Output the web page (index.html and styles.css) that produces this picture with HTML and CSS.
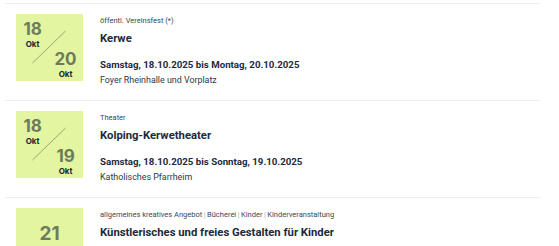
FILE: index.html
```html
<!DOCTYPE html>
<html lang="de">
<head>
<meta charset="utf-8">
<link rel="stylesheet" href="styles.css">
</head>
<body>
<ul class="events">
  <li class="event">
    <div class="datebox range">
      <div class="d start"><span class="day">18</span><span class="mon">Okt</span></div>
      <svg class="slash" viewBox="0 0 67 67" width="67" height="67"><line x1="16.5" y1="49" x2="49.5" y2="17" stroke="#9aa67f" stroke-width="1"/></svg>
      <div class="d end"><span class="day">20</span><span class="mon">Okt</span></div>
    </div>
    <div class="info">
      <div class="cats">öffentl. Vereinsfest (*)</div>
      <div class="title">Kerwe</div>
      <div class="when">Samstag, 18.10.2025 bis Montag, 20.10.2025</div>
      <div class="where">Foyer Rheinhalle und Vorplatz</div>
    </div>
  </li>
  <li class="event">
    <div class="datebox range">
      <div class="d start"><span class="day">18</span><span class="mon">Okt</span></div>
      <svg class="slash" viewBox="0 0 67 67" width="67" height="67"><line x1="16.5" y1="49" x2="49.5" y2="17" stroke="#9aa67f" stroke-width="1"/></svg>
      <div class="d end"><span class="day">19</span><span class="mon">Okt</span></div>
    </div>
    <div class="info">
      <div class="cats">Theater</div>
      <div class="title">Kolping-Kerwetheater</div>
      <div class="when">Samstag, 18.10.2025 bis Sonntag, 19.10.2025</div>
      <div class="where">Katholisches Pfarrheim</div>
    </div>
  </li>
  <li class="event">
    <div class="datebox single">
      <div class="d"><span class="day">21</span><span class="mon">Okt</span></div>
    </div>
    <div class="info">
      <div class="cats">allgemeines kreatives Angebot<span class="sep">|</span>Bücherei<span class="sep">|</span>Kinder<span class="sep">|</span>Kinderveranstaltung</div>
      <div class="title">Künstlerisches und freies Gestalten für Kinder</div>
      <div class="when">Dienstag, 21.10.2025</div>
      <div class="where">Bücherei</div>
    </div>
  </li>
</ul>
</body>
</html>
```
FILE: styles.css
```css
html, body {
  margin: 0;
  padding: 0;
  background: #ffffff;
}
body {
  font-family: "Roboto", "Liberation Sans", sans-serif;
  color: #1b2a3c;
  height: 246px;
  overflow: hidden;
}
.events {
  list-style: none;
  margin: 3px 0 0 5px;
  padding: 0;
  width: 535px;
}
.event {
  display: flex;
  align-items: flex-start;
  gap: 17px;
  border-top: 1px solid #efefef;
  padding: 10px 0 13px 11px;
}
.datebox {
  position: relative;
  flex: 0 0 67px;
  width: 67px;
  height: 67px;
  background: #e3f5a0;
  box-sizing: border-box;
}
.datebox.range {
  display: flex;
  flex-direction: column;
  justify-content: space-between;
  padding: 5px 7px 6px 6px;
}
.datebox.single {
  display: flex;
  justify-content: center;
  padding-top: 15px;
}
.d {
  display: flex;
  flex-direction: column;
  align-items: center;
  width: 21px;
}
.d.end {
  align-self: flex-end;
}
.day {
  font-family: "Inter", "Roboto", sans-serif;
  font-size: 17px;
  font-weight: 700;
  line-height: 20px;
  color: #6c7b5b;
  letter-spacing: -0.2px;
}
.mon {
  font-family: "Inter", "Roboto", sans-serif;
  font-size: 8px;
  font-weight: 700;
  line-height: 10px;
  color: #1a2434;
}
.single .day {
  font-size: 19px;
  line-height: 22px;
}
.slash {
  position: absolute;
  left: 0;
  top: 0;
}
.info {
  display: flex;
  flex-direction: column;
  padding-top: 1px;
  height: 73px;
  box-sizing: border-box;
}
.cats {
  font-size: 7.5px;
  line-height: 12px;
  color: #3b4656;
}
.sep {
  color: #a0a8b2;
  margin: 0 1.5px;
}
.title {
  font-size: 11.3px;
  font-weight: 700;
  line-height: 16px;
  margin-top: 3.5px;
}
.when {
  font-size: 9.7px;
  font-weight: 700;
  line-height: 14px;
  margin-top: 11.5px;
}
.where {
  font-size: 8.9px;
  line-height: 14px;
  margin-top: 1px;
  color: #2c3a4c;
}
```
